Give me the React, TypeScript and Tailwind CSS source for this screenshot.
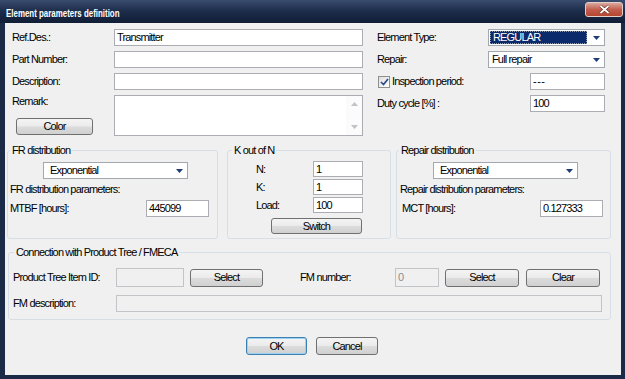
import * as React from "react";

const btnBg =
  "bg-[linear-gradient(#f4f4f4_0%,#ebebeb_48%,#dcdcdc_52%,#d0d0d0_100%)]";

function TextBox({
  value = "",
  className = "",
  disabled = false,
}: {
  value?: string;
  className?: string;
  disabled?: boolean;
}) {
  return (
    <div
      className={`flex items-center border px-[2px] whitespace-nowrap ${
        disabled
          ? "border-[#c2c4c8] bg-[#f0f0f0] text-[#8d8d8d]"
          : "border-[#abadb3] bg-white text-black"
      } ${className}`}
    >
      {value}
    </div>
  );
}

function Btn({ children, className = "", def = false }: { children: React.ReactNode; className?: string; def?: boolean }) {
  return (
    <button
      className={`flex items-center justify-center rounded-[3px] border ${
        def ? "border-[#3c7fb1] shadow-[inset_0_0_0_1px_#9ed2f3]" : "border-[#707070]"
      } ${btnBg} text-black ${className}`}
    >
      {children}
    </button>
  );
}

function Arrow() {
  return (
    <svg width="7" height="4" viewBox="0 0 7 4">
      <path d="M0 0 H7 L3.5 4 Z" fill="#1d3c78" />
    </svg>
  );
}

function Combo({
  value,
  className = "",
  highlight = false,
  pad = "pl-[3px]",
}: {
  value: string;
  className?: string;
  highlight?: boolean;
  pad?: string;
}) {
  return (
    <div className={`flex h-[17px] items-stretch border border-[#a3a7ae] bg-white ${className}`}>
      {highlight ? (
        <div className="m-[1px] flex flex-1 items-center border border-dotted border-[#8f9bb3] bg-[#0b2a6b] pl-[2px] text-white">
          {value}
        </div>
      ) : (
        <div className={`flex flex-1 items-center ${pad}`}>{value}</div>
      )}
      <div className="flex w-[16px] items-center justify-center">
        <Arrow />
      </div>
    </div>
  );
}

function Group({
  title,
  className = "",
  legendLeft,
  children,
}: {
  title: string;
  className?: string;
  legendLeft: string;
  children: React.ReactNode;
}) {
  return (
    <div className={`relative rounded-[3px] border border-[#d5dfe5] ${className}`}>
      <span className={`absolute -top-[8px] ${legendLeft} bg-[#f0f0f0] px-[2px] leading-[14px]`}>{title}</span>
      {children}
    </div>
  );
}

export default function App() {
  return (
    <div className="flex h-[379px] w-[625px] flex-col bg-[#1b2a46] font-['Liberation_Sans',Arial,sans-serif] text-[11px] tracking-[-0.85px] text-black">
      {/* title bar */}
      <div className="flex h-[23px] items-start justify-between bg-linear-to-b from-[#3a4c6e] via-[#1c2c4a] to-[#101d35]">
        <div className="mt-[5px] ml-[6px] origin-left scale-x-[0.72] text-[11px] font-bold tracking-normal whitespace-nowrap text-white">
          Element parameters definition
        </div>
        <div className="mt-[2px] mr-[2px] flex h-[15px] w-[38px] items-center justify-center rounded-[3px] border border-[#e3cdc8] bg-linear-to-b from-[#d8a89e] via-[#c25e4e] to-[#b4452f]">
          <svg width="11" height="9" viewBox="0 0 11 9">
            <path d="M1.5 1 L9.5 8 M9.5 1 L1.5 8" stroke="#5a2018" strokeWidth="3" />
            <path d="M1.5 1 L9.5 8 M9.5 1 L1.5 8" stroke="#ffffff" strokeWidth="1.8" />
          </svg>
        </div>
      </div>

      {/* dialog body */}
      <div className="mr-[4px] mb-[4px] ml-[5px] flex flex-1 flex-col bg-[#f0f0f0]">
        {/* top fields */}
        <div className="mt-[6px] ml-[7px] flex">
          <div className="flex w-[351px] flex-col gap-[5px]">
            <div className="flex h-[17px] items-center">
              <div className="w-[102px]">Ref.Des.:</div>
              <TextBox value="Transmitter" className="h-[17px] w-[249px]" />
            </div>
            <div className="flex h-[17px] items-center">
              <div className="w-[102px]">Part Number:</div>
              <TextBox className="h-[17px] w-[249px]" />
            </div>
            <div className="flex h-[17px] items-center">
              <div className="w-[102px]">Description:</div>
              <TextBox className="h-[17px] w-[249px]" />
            </div>
            <div className="flex h-[41px]">
              <div className="flex w-[102px] flex-col">
                <div className="mt-[-1px] leading-[14px]">Remark:</div>
                <Btn className="mt-auto mb-[1px] ml-[4px] h-[17px] w-[77px]">Color</Btn>
              </div>
              <div className="flex w-[249px] border border-[#abadb3] bg-white">
                <div className="flex-1" />
                <div className="flex w-[16px] flex-col items-center justify-between bg-[#fbfbfb] py-[6px]">
                  <svg width="7" height="4" viewBox="0 0 7 4">
                    <path d="M0 4 H7 L3.5 0 Z" fill="#c2c2c2" />
                  </svg>
                  <svg width="7" height="4" viewBox="0 0 7 4">
                    <path d="M0 0 H7 L3.5 4 Z" fill="#c2c2c2" />
                  </svg>
                </div>
              </div>
            </div>
          </div>

          <div className="ml-[14px] flex w-[228px] flex-col gap-[5px]">
            <div className="flex h-[17px] items-center">
              <div className="w-[111px]">Element Type:</div>
              <Combo value="REGULAR" highlight className="w-[117px]" />
            </div>
            <div className="flex h-[17px] items-center">
              <div className="w-[111px]">Repair:</div>
              <Combo value="Full repair" className="w-[117px]" />
            </div>
            <div className="flex h-[17px] items-center">
              <div className="flex w-[153px] items-center">
                <div className="ml-[1px] flex h-[12px] w-[12px] items-center justify-center border border-[#8e8f8f] bg-linear-to-br from-[#dedede] to-white">
                  <svg width="9" height="8" viewBox="0 0 9 8">
                    <path d="M1 4 L3.5 6.5 L8 1" stroke="#2a4a8c" strokeWidth="1.7" fill="none" />
                  </svg>
                </div>
                <span className="ml-[2px]">Inspection period:</span>
              </div>
              <TextBox value="---" className="h-[17px] w-[75px] tracking-[0.5px]" />
            </div>
            <div className="flex h-[17px] items-center">
              <div className="w-[153px]">Duty cycle [%] :</div>
              <TextBox value="100" className="h-[17px] w-[75px]" />
            </div>
          </div>
        </div>

        {/* distribution groups */}
        <div className="mt-[14px] ml-[2px] flex">
          <Group title="FR distribution" legendLeft="left-[2px]" className="h-[89px] w-[211px]">
            <Combo value="Exponential" pad="pl-[6px]" className="mt-[11px] ml-[35px] w-[145px]" />
            <div className="mt-[3px] ml-[2px] leading-[14px]">FR distribution parameters:</div>
            <div className="mt-[4px] ml-[2px] flex h-[17px] items-center">
              <div className="w-[136px]">MTBF [hours]:</div>
              <TextBox value="445099" className="h-[17px] w-[63px]" />
            </div>
          </Group>

          <Group title="K out of N" legendLeft="left-[4px]" className="ml-[9px] h-[89px] w-[164px]">
            <div className="mt-[10px] flex flex-col gap-[2px]">
              <div className="ml-[28px] flex h-[16px] items-center">
                <div className="w-[57px]">N:</div>
                <TextBox value="1" className="h-[16px] w-[50px]" />
              </div>
              <div className="ml-[28px] flex h-[16px] items-center">
                <div className="w-[57px]">K:</div>
                <TextBox value="1" className="h-[16px] w-[50px]" />
              </div>
              <div className="ml-[28px] flex h-[16px] items-center">
                <div className="w-[57px]">Load:</div>
                <TextBox value="100" className="h-[16px] w-[50px]" />
              </div>
            </div>
            <Btn className="mt-[5px] ml-[43px] h-[16px] w-[91px]">Switch</Btn>
          </Group>

          <Group title="Repair distribution" legendLeft="left-[2px]" className="ml-[5px] h-[89px] w-[215px]">
            <Combo value="Exponential" pad="pl-[6px]" className="mt-[11px] ml-[36px] w-[145px]" />
            <div className="mt-[3px] ml-[3px] leading-[14px]">Repair distribution parameters:</div>
            <div className="mt-[4px] ml-[5px] flex h-[17px] items-center">
              <div className="w-[138px]">MCT [hours]:</div>
              <TextBox value="0.127333" className="h-[17px] w-[63px]" />
            </div>
          </Group>
        </div>

        {/* product tree / FMECA */}
        <Group
          title="Connection with Product Tree / FMECA"
          legendLeft="left-[5px]"
          className="mt-[13px] ml-[3px] h-[68px] w-[603px]"
        >
          <div className="mt-[15px] ml-[4px] flex h-[19px] items-center">
            <div className="w-[103px]">Product Tree Item ID:</div>
            <TextBox disabled className="h-[19px] w-[68px]" />
            <Btn className="ml-[6px] h-[18px] w-[73px]">Select</Btn>
            <div className="ml-[37px] w-[95px]">FM number:</div>
            <TextBox disabled value="0" className="h-[19px] w-[44px]" />
            <Btn className="ml-[6px] h-[18px] w-[74px]">Select</Btn>
            <Btn className="ml-[7px] h-[18px] w-[74px]">Clear</Btn>
          </div>
          <div className="mt-[8px] ml-[4px] flex h-[17px] items-center">
            <div className="w-[103px]">FM description:</div>
            <TextBox disabled className="h-[17px] w-[486px]" />
          </div>
        </Group>

        {/* dialog buttons */}
        <div className="mt-[17px] flex">
          <Btn def className="ml-[241px] h-[18px] w-[61px]">OK</Btn>
          <Btn className="ml-[9px] h-[18px] w-[62px]">Cancel</Btn>
        </div>
      </div>
    </div>
  );
}
